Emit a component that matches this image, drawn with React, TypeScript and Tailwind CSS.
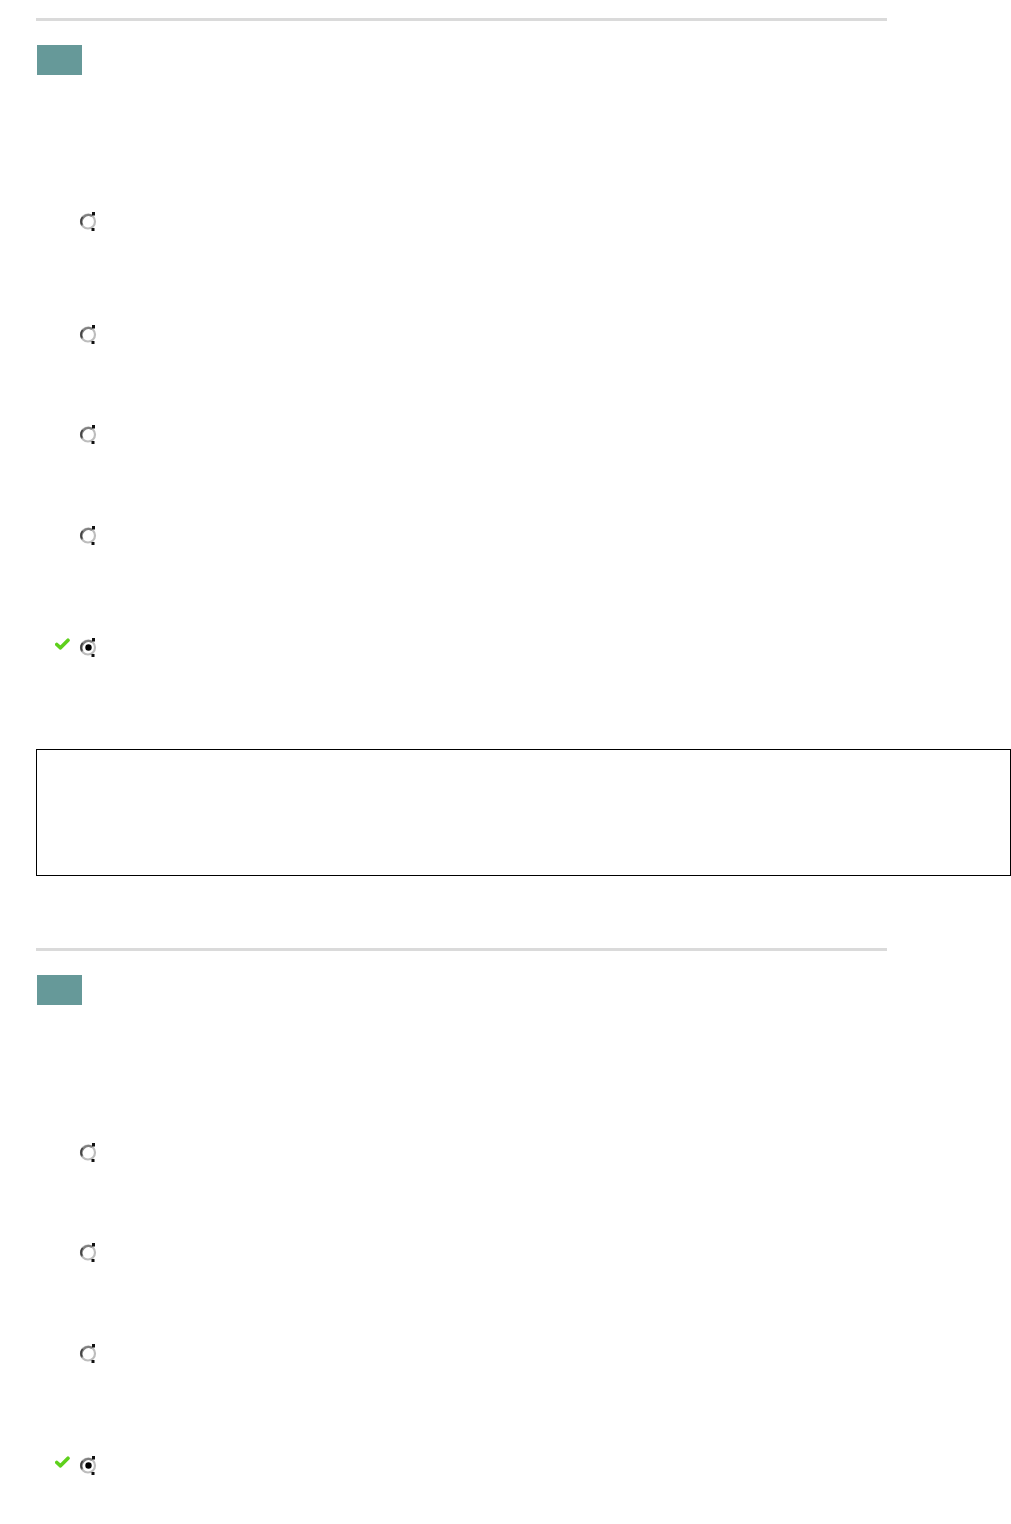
import React from 'react';

function Radio({ checked = false }: { checked?: boolean }) {
    return (
        <svg width="19" height="21" viewBox="0 0 19 21" className="block">
            <circle cx="9" cy="10.5" r="7" fill="#fff" stroke="#bdbdbd" strokeWidth="2.2" />
            <path d="M 13 5 A 7 7 0 0 0 3.4 14.5" fill="none" stroke="#808080" strokeWidth="2.4" />
            <path d="M 3.6 6 A 7 7 0 0 0 2.8 13.5" fill="none" stroke="#404040" strokeWidth="1.6" />
            <rect x="13" y="1" width="3" height="3.5" fill="#111" />
            <rect x="12.5" y="17" width="3" height="3" fill="#111" />
            {checked && <circle cx="9.5" cy="10.5" r="3.2" fill="#000" />}
        </svg>
    );
}

function Check() {
    return (
        <svg width="15" height="13" viewBox="0 0 15 13" className="block">
            <path d="M1.8 6.5 L5.5 9.8 L13 2.2" fill="none" stroke="#5ed01c" strokeWidth="3.6" strokeLinecap="round" strokeLinejoin="round" />
        </svg>
    );
}

function Option({ checked = false, mt }: { checked?: boolean; mt: string }) {
    return (
        <div className={`flex items-center ${mt}`}>
            <div className="flex w-[79px] justify-end pr-[9px] pb-[6px]">
                {checked ? <Check /> : <div className="h-[13px] w-[15px]" />}
            </div>
            <Radio checked={checked} />
        </div>
    );
}

function SectionHead({ mt }: { mt: string }) {
    return (
        <div className={mt}>
            <div className="ml-[36px] h-[3px] w-[851px] bg-[#dadada]" />
            <div className="ml-[37px] mt-[24px] h-[30px] w-[45px] bg-[#669999]" />
        </div>
    );
}

export default function App() {
    return (
        <main className="min-h-[1524px] w-[1011px] bg-white pb-[40px]" style={{ fontFamily: 'Liberation Sans, Arial, sans-serif' }}>
            <SectionHead mt="pt-[18px]" />

            <Option mt="mt-[136px]" />
            <Option mt="mt-[92px]" />
            <Option mt="mt-[79px]" />
            <Option mt="mt-[80px]" />
            <Option checked mt="mt-[91px]" />

            <div className="ml-[36px] mt-[91px] h-[127px] w-[975px] border border-black" />

            <SectionHead mt="mt-[72px]" />

            <Option mt="mt-[137px]" />
            <Option mt="mt-[79px]" />
            <Option mt="mt-[80px]" />
            <Option checked mt="mt-[91px]" />
        </main>
    );
}
